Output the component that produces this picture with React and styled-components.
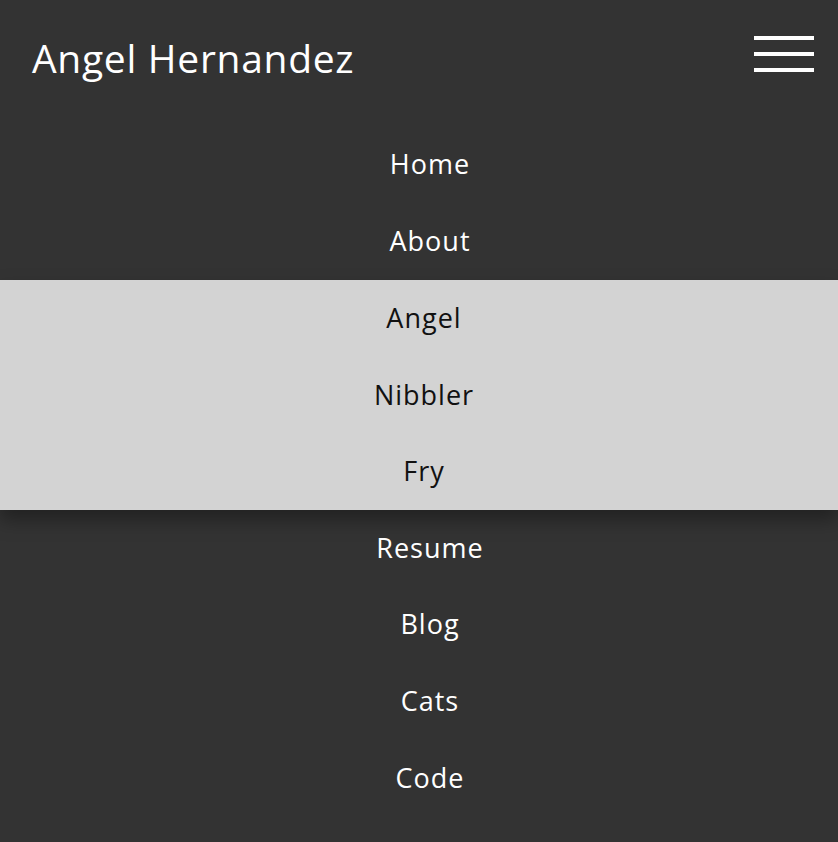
import React from "react";
import styled, { createGlobalStyle } from "styled-components";

const GlobalStyle = createGlobalStyle`
  html, body {
    margin: 0;
    padding: 0;
    background: #333333;
  }
  body {
    font-family: "Open Sans", Lato, sans-serif;
  }
`;

const mainLinks = ["Home", "About"];
const subLinks = ["Angel", "Nibbler", "Fry"];
const moreLinks = ["Resume", "Blog", "Cats", "Code"];

const App = () => {
  return (
    <Page>
      <GlobalStyle />
      <Header>
        <Title>Angel Hernandez</Title>
        <Burger aria-label="menu">
          <Bar />
          <Bar />
          <Bar />
        </Burger>
      </Header>
      <Nav>
        {mainLinks.map((l) => (
          <NavItem key={l}>{l}</NavItem>
        ))}
        <SubMenu>
          {subLinks.map((l) => (
            <SubItem key={l}>{l}</SubItem>
          ))}
        </SubMenu>
        {moreLinks.map((l) => (
          <NavItem key={l}>{l}</NavItem>
        ))}
      </Nav>
    </Page>
  );
};

export default App;

const Page = styled.div`
  width: 838px;
  min-height: 842px;
  background: #333333;
  overflow: hidden;
`;

const Header = styled.header`
  height: 127px;
  display: flex;
  justify-content: space-between;
  align-items: flex-start;
  padding: 0 24px 0 32px;
  box-sizing: border-box;
`;

const Title = styled.h1`
  margin: 32px 0 0;
  font-size: 39px;
  font-weight: 400;
  line-height: 52px;
  letter-spacing: 0.7px;
  color: #ffffff;
`;

const Burger = styled.button`
  margin-top: 36px;
  width: 60px;
  height: 36px;
  padding: 0;
  border: none;
  background: transparent;
  display: flex;
  flex-direction: column;
  justify-content: space-between;
  cursor: pointer;
`;

const Bar = styled.span`
  display: block;
  width: 60px;
  height: 4px;
  background: #ffffff;
`;

const Nav = styled.ul`
  list-style: none;
  margin: 0;
  padding: 0;
  display: flex;
  flex-direction: column;
`;

const NavItem = styled.li`
  height: 76.67px;
  display: flex;
  align-items: center;
  justify-content: center;
  padding: 0 0 3px 22px;
  box-sizing: border-box;
  font-size: 27px;
  letter-spacing: 1px;
  color: #ffffff;
`;

const SubMenu = styled.ul`
  list-style: none;
  margin: 0;
  padding: 0;
  background: #d3d3d3;
  position: relative;
  z-index: 1;
  box-shadow: 0 10px 18px rgba(0, 0, 0, 0.35);
`;

const SubItem = styled.li`
  height: 76.67px;
  display: flex;
  align-items: center;
  justify-content: center;
  padding: 0 0 2px 10px;
  box-sizing: border-box;
  font-size: 27px;
  letter-spacing: 1px;
  color: #111111;
`;
